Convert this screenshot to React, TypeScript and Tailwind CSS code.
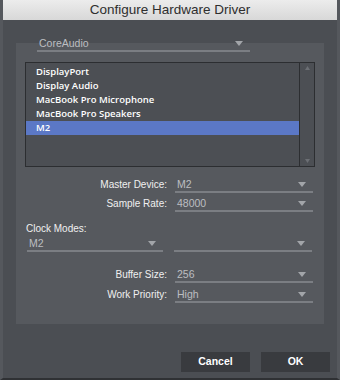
import { ReactNode } from 'react';

const devices = ['DisplayPort', 'Display Audio', 'MacBook Pro Microphone', 'MacBook Pro Speakers', 'M2'];

function Arrow() {
  return (
    <svg width="8" height="5" viewBox="0 0 8 5" className="shrink-0">
      <path d="M0 0 H8 L4 5 Z" fill="#a2a5a9" />
    </svg>
  );
}

function Dropdown({ value, className = '' }: { value?: string; className?: string }) {
  return (
    <div className={`flex items-center justify-between h-[16px] border-b-2 border-[#7b7e83] pl-[2px] pr-[7px] ${className}`}>
      <span className="text-[10.5px] leading-[14px] text-[#bcbec1]">{value}</span>
      <Arrow />
    </div>
  );
}

function Row({ label, children }: { label: string; children: ReactNode }) {
  return (
    <div className="flex items-center">
      <span className="w-[150px] text-right pr-[8px] text-[10px] font-medium text-[#f0f0f0] leading-[14px]">{label}</span>
      {children}
    </div>
  );
}

export default function App() {
  return (
    <div
      className="w-[340px] h-[380px] bg-[#4b4e53] flex flex-col overflow-hidden border-l-[3px] border-r-[3px] border-b-2 border-l-[#55585d] border-r-[#55585d] border-b-[#2f3134]"
      style={{ fontFamily: '"Liberation Sans", Arial, sans-serif' }}
    >
      <div className="h-[20px] shrink-0 -mx-[3px] bg-gradient-to-b from-[#ececec] to-[#d8d8d8] flex items-center justify-center text-[13.5px] text-[#2e2e2e]">
        Configure Hardware Driver
      </div>

      <div className="flex-1 flex flex-col px-[13px]">
        <Dropdown value="CoreAudio" className="relative z-10 mt-[16px] ml-[21px] w-[213px]" />

        <div className="-mt-[9px] h-[281px] bg-[#56595e] px-[9px] pt-[19px] flex flex-col">
          <div className="h-[105px] border border-[#2c2e31] bg-[#4c4f54] flex">
            <div className="flex-1 pt-[2px]">
              {devices.map((d) => (
                <div
                  key={d}
                  className={`h-[14px] pl-[10px] flex items-center text-[9.5px] font-semibold text-white ${
                    d === 'M2' ? 'bg-[#5b78c6]' : ''
                  }`}
                  style={{ fontFamily: '"Open Sans", "DejaVu Sans", sans-serif' }}
                >
                  {d}
                </div>
              ))}
            </div>
            <div className="w-[15px] border-l border-[#2c2e31] flex flex-col items-center justify-between py-[3px]">
              <svg width="5" height="4" viewBox="0 0 5 4">
                <path d="M0 4 L2.5 0 L5 4 Z" fill="#6c6f74" />
              </svg>
              <svg width="5" height="4" viewBox="0 0 5 4">
                <path d="M0 0 L2.5 4 L5 0 Z" fill="#6c6f74" />
              </svg>
            </div>
          </div>

          <div className="mt-[10px] flex flex-col gap-[3px]">
            <Row label="Master Device:">
              <Dropdown value="M2" className="w-[138px]" />
            </Row>
            <Row label="Sample Rate:">
              <Dropdown value="48000" className="w-[138px]" />
            </Row>
          </div>

          <div className="mt-[10px] pl-[1px] text-[10px] font-medium text-[#f0f0f0] leading-[14px]">Clock Modes:</div>
          <div className="flex items-center gap-[11px] pl-[2px]">
            <Dropdown value="M2" className="w-[136px]" />
            <Dropdown className="w-[138px]" />
          </div>

          <div className="mt-[15px] flex flex-col gap-[4px]">
            <Row label="Buffer Size:">
              <Dropdown value="256" className="w-[138px]" />
            </Row>
            <Row label="Work Priority:">
              <Dropdown value="High" className="w-[138px]" />
            </Row>
          </div>
        </div>

        <div className="mt-[28px] flex justify-end gap-[11px] -mr-[6px]">
          <button className="w-[69px] h-[20px] bg-[#393b3f] text-[10.5px] font-bold text-white">Cancel</button>
          <button className="w-[69px] h-[20px] bg-[#393b3f] text-[10.5px] font-bold text-white">OK</button>
        </div>
      </div>
    </div>
  );
}
